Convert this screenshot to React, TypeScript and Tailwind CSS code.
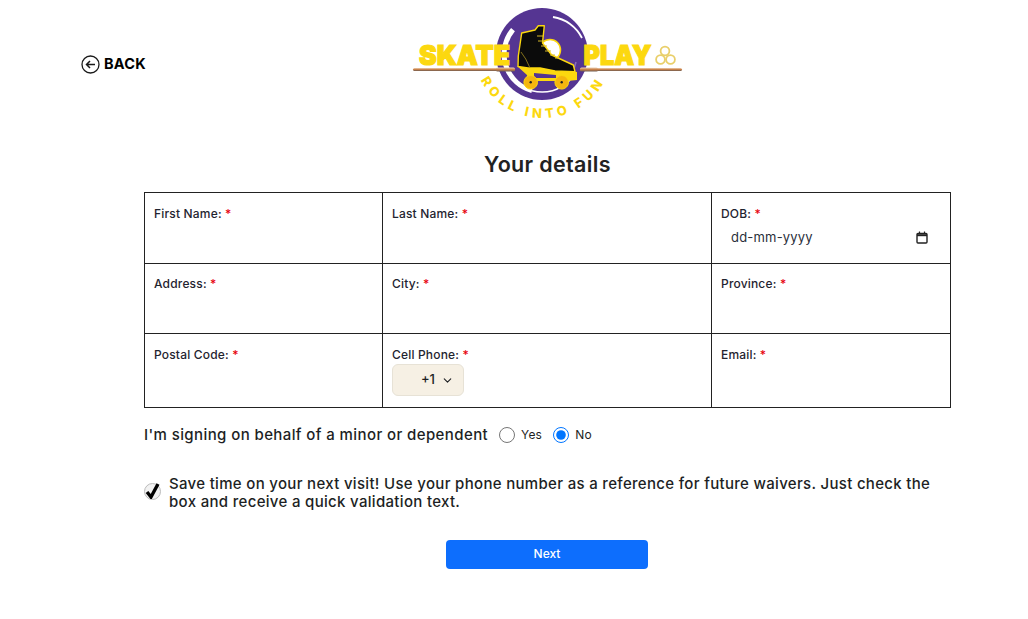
import { ChevronDown } from "lucide-react";

function Logo() {
  return (
    <svg width="300" height="130" viewBox="0 0 300 130" className="block">
      <defs>
        <path id="arc" d="M 73 48 A 70 70 0 0 0 213 48" />
        <linearGradient id="rod" x1="0" y1="0" x2="0" y2="1">
          <stop offset="0" stopColor="#ecd0b2" />
          <stop offset="0.5" stopColor="#c9814a" />
          <stop offset="1" stopColor="#6d5a50" />
        </linearGradient>
      </defs>
      <circle cx="142" cy="54" r="46" fill="#553592" />
      <path d="M 113 29.6 A 38 38 0 0 0 132 90.7" fill="none" stroke="#fff" strokeWidth="5" />
      <path d="M 132 90.7 A 38 38 0 0 0 170 80" fill="none" stroke="#fff" strokeWidth="1.5" />
      <path d="M 153 17 A 39 39 0 0 1 182 38" fill="none" stroke="#fff" strokeWidth="1.8" />
      <path d="M 176 62 A 35 35 0 0 1 160 85" fill="none" stroke="#8a6fbb" strokeWidth="1.5" />
      <circle cx="150" cy="50" r="10.5" fill="#fff" stroke="#fcd80f" strokeWidth="1.5" />
      <text x="19" y="65" fontFamily="Inter, sans-serif" fontWeight="900" fontSize="27" fill="#fcd80f" stroke="#fcd80f" strokeWidth="1.2" textLength="91" lengthAdjust="spacingAndGlyphs">SKATE</text>
      <text x="183.5" y="65" fontFamily="Inter, sans-serif" fontWeight="900" fontSize="27" fill="#fcd80f" stroke="#fcd80f" strokeWidth="1.2" textLength="68" lengthAdjust="spacingAndGlyphs">PLAY</text>
      <g fill="#fff" stroke="#e9cf6a" strokeWidth="1.8">
        <circle cx="265" cy="51" r="4.4" />
        <circle cx="260.5" cy="59.5" r="4.4" />
        <circle cx="270.5" cy="59.5" r="4.4" />
      </g>
      <rect x="13" y="68" width="102" height="3" rx="1.5" fill="url(#rod)" />
      <rect x="96" y="67.5" width="19" height="4" rx="1.5" fill="url(#rod)" />
      <rect x="180" y="68" width="102" height="3" rx="1.5" fill="url(#rod)" />
      <rect x="180" y="67.5" width="18" height="4" rx="1.5" fill="url(#rod)" />
      <path d="M 117 66 L 127 75 L 128 81 L 168 81 L 177 80 L 177 72 L 142 68 Z" fill="#fcd80f" />
      <path d="M 134 78 L 156 78 L 156 75 L 134 73 Z" fill="#553592" />
      <path d="M 121.7 33 L 135 30 L 138.3 25.7 L 144.3 25.7 L 142.5 43 L 151.7 55 L 173.3 65 L 175 71.7 L 155 71 L 140 68 L 128 68 L 118 66.5 L 118.3 56 Z" fill="#0b0b0b" stroke="#fcd80f" strokeWidth="1.4" strokeLinejoin="round" />
      <path d="M 137 36 L 143 36 M 138 41 L 144 41 M 141 46 L 147 46 M 145 51 L 151 51 M 150 55 L 155 55 M 155 58 L 159 58" stroke="#d8b92a" strokeWidth="1" />
      <path d="M 121 52 Q 126 58 130 68" fill="none" stroke="#a08a20" strokeWidth="0.8" />
      <circle cx="130.7" cy="82.3" r="6.8" fill="#f5b60f" stroke="#fcd80f" />
      <circle cx="130.7" cy="82.3" r="1.2" fill="#222" />
      <circle cx="161.7" cy="82.3" r="6.8" fill="#f5b60f" stroke="#fcd80f" />
      <circle cx="161.7" cy="82.3" r="1.2" fill="#222" />
      <text fontFamily="Inter, sans-serif" fontWeight="800" fontSize="13" fill="#fcd80f" letterSpacing="4.2">
        <textPath href="#arc" startOffset="50%" textAnchor="middle">ROLL INTO FUN</textPath>
      </text>
    </svg>
  );
}

function Label({ children }: { children: string }) {
  return (
    <div className="text-[12px] font-medium leading-[18px] tracking-[0.18px] text-[#1f2430]">
      {children}: <span className="text-red-600">*</span>
    </div>
  );
}

export default function App() {
  return (
    <div className="h-[619px] w-[1028px] overflow-hidden bg-white font-['Inter',sans-serif] text-[#1d1f24]">
      <header className="flex h-[130px] pl-[81px]">
        <a className="mt-[54px] flex h-[20px] w-[319px] items-center gap-[4px] text-[14.5px] font-bold tracking-[0.2px] text-black">
          <svg width="19" height="19" viewBox="0 0 19 19" fill="none" stroke="#1a1a1a" className="shrink-0">
            <circle cx="9.5" cy="9.5" r="8.5" strokeWidth="1.3" />
            <path d="M14 9.5H5.5M9 6L5.5 9.5L9 13" strokeWidth="1.5" />
          </svg>
          BACK
        </a>
        <Logo />
      </header>

      <h1 className="ml-[144px] mt-[21px] w-[807px] text-center text-[21.5px] font-semibold leading-[26px] tracking-[0.35px] text-[#222]">Your details</h1>

      <div className="ml-[144px] mt-[15px] grid h-[216px] w-[807px] grid-cols-[238px_329px_238px] grid-rows-[71px_70px_73px] border border-[#222]">
        <div className="border-b border-r border-[#222] pl-[9px] pt-[12px]"><Label>First Name</Label></div>
        <div className="border-b border-r border-[#222] pl-[9px] pt-[12px]"><Label>Last Name</Label></div>
        <div className="border-b border-[#222] pl-[9px] pt-[12px]">
          <Label>DOB</Label>
          <div className="mt-[5px] flex w-[207px] items-center justify-between pl-[10px] text-[13px] leading-[18px] tracking-[0.2px] text-[#2a2f3a]">
            dd-mm-yyyy
            <svg width="12" height="13" viewBox="0 0 12 13" fill="none" stroke="#222">
              <rect x="1" y="2.5" width="10" height="9.5" rx="1" strokeWidth="1.4" />
              <path d="M1 4.2H11" strokeWidth="2" />
              <path d="M3.5 0.5V2.5M8.5 0.5V2.5" strokeWidth="1.2" />
            </svg>
          </div>
        </div>
        <div className="border-b border-r border-[#222] pl-[9px] pt-[11px]"><Label>Address</Label></div>
        <div className="border-b border-r border-[#222] pl-[9px] pt-[11px]"><Label>City</Label></div>
        <div className="border-b border-[#222] pl-[9px] pt-[11px]"><Label>Province</Label></div>
        <div className="border-r border-[#222] pl-[9px] pt-[12px]"><Label>Postal Code</Label></div>
        <div className="border-r border-[#222] pl-[9px] pt-[12px]">
          <Label>Cell Phone</Label>
          <div className="flex h-[32px] w-[72px] items-center justify-end gap-[6px] rounded-[6px] border border-[#e7e2d6] bg-[#f6f0e4] pr-[9px] text-[13px] font-medium">
            +1
            <ChevronDown size={13} strokeWidth={2} />
          </div>
        </div>
        <div className="pl-[9px] pt-[12px]"><Label>Email</Label></div>
      </div>

      <div className="ml-[144px] mt-[17px] flex h-[20px] items-center text-[15px] font-[450] tracking-[0.4px]">
        <span className="w-[355px]">I'm signing on behalf of a minor or dependent</span>
        <label className="flex items-center gap-[6px] text-[12px] font-normal tracking-[0.2px]">
          <input type="radio" name="minor" className="m-0 h-[16px] w-[16px] accent-[#0075ff]" />
          Yes
        </label>
        <label className="ml-[11px] flex items-center gap-[6px] text-[12px] font-normal tracking-[0.2px]">
          <input type="radio" name="minor" defaultChecked className="m-0 h-[16px] w-[16px] accent-[#0075ff]" />
          No
        </label>
      </div>

      <div className="ml-[144px] mt-[30px] flex w-[807px] items-center gap-[8px]">
        <span className="mb-[3px] flex h-[17px] w-[17px] shrink-0 items-center justify-center rounded-full border border-[#bbb] bg-[#f2f2f2]">
          <svg width="15" height="17" viewBox="0 0 15 17" fill="none" stroke="#000" strokeWidth="3.4" className="-mt-[2px]">
            <path d="M2 10L6 15L13 2" />
          </svg>
        </span>
        <p className="text-[15px] font-[450] leading-[18px] tracking-[0.315px]">
          Save time on your next visit! Use your phone number as a reference for future waivers. Just check the box and receive a quick validation text.
        </p>
      </div>

      <button className="ml-[446px] mt-[29px] block h-[29px] w-[202px] rounded-[4px] bg-[#0d6efd] pb-[2px] text-center text-[12px] font-medium text-white">
        Next
      </button>
    </div>
  );
}
